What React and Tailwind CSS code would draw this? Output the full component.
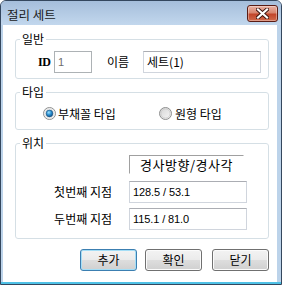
import React from "react";

function CloseX() {
  return (
    <svg width="13" height="11" viewBox="0 0 13 11">
      <path d="M2 1.5 L11 9.5 M11 1.5 L2 9.5" stroke="#3b1510" strokeWidth="4" strokeLinecap="square" />
      <path d="M2 1.5 L11 9.5 M11 1.5 L2 9.5" stroke="#ffffff" strokeWidth="2.2" strokeLinecap="square" />
    </svg>
  );
}

function Radio({ checked }) {
  return (
    <svg width="13" height="13" viewBox="0 0 13 13">
      <defs>
        <linearGradient id={checked ? "rgc" : "rgu"} x1="0" y1="0" x2="1" y2="1">
          <stop offset="0" stopColor={checked ? "#f4f4f4" : "#d4d4d4"} />
          <stop offset="1" stopColor={checked ? "#ffffff" : "#f8f8f8"} />
        </linearGradient>
        <radialGradient id="rdot" cx="0.4" cy="0.35" r="0.7">
          <stop offset="0" stopColor="#9fe2ff" />
          <stop offset="0.5" stopColor="#2a8fd0" />
          <stop offset="1" stopColor="#0d4d86" />
        </radialGradient>
      </defs>
      <circle cx="6.5" cy="6.5" r="6" fill={`url(#${checked ? "rgc" : "rgu"})`} stroke="#8e8f8f" strokeWidth="1" />
      <circle cx="6.5" cy="6.5" r="4.6" fill="none" stroke={checked ? "#d6d6d6" : "#c9c9c9"} strokeWidth="0.8" />
      {checked && <circle cx="6.5" cy="6.5" r="3.4" fill="url(#rdot)" stroke="#1c4f7a" strokeWidth="0.6" />}
    </svg>
  );
}

function Btn({ children, def, className = "" }) {
  return (
    <div
      className={
        "w-[57px] h-[22px] rounded-[3px] border flex items-center justify-center text-[12px] leading-[16px] text-black bg-[linear-gradient(#f3f3f3_0%,#ebebeb_48%,#dddddd_52%,#d0d0d0_100%)] " +
        (def
          ? "border-[#3c7fb1] shadow-[inset_0_0_0_1px_#a5def6] "
          : "border-[#707070] shadow-[inset_0_0_0_1px_#fbfbfb] ") +
        className
      }
    >
      {children}
    </div>
  );
}

export default function App() {
  return (
    <div className="w-[282px] h-[285px] flex flex-col border border-[#34475e] rounded-t-[6px] bg-[#bcd3ea] overflow-hidden font-['Noto_Sans_CJK_KR','Noto_Sans',sans-serif] text-black">
      {/* Title bar */}
      <div className="h-[24px] flex items-start justify-between pl-[6px] pr-[3px] bg-[linear-gradient(#a5bedb,#c2d7ed)]">
        <div className="text-[12.5px] leading-[16px] pt-[6px] text-[#1a1a1a]">절리 세트</div>
        <div className="mt-[4px] w-[31px] h-[17px] rounded-[3px] border border-[#5a1c14] flex items-center justify-center bg-[linear-gradient(#eab1a2_0%,#d88670_45%,#c2452a_55%,#d06a4c_100%)] shadow-[inset_0_0_0_1px_rgba(255,255,255,0.35)]">
          <CloseX />
        </div>
      </div>

      {/* Client */}
      <div className="flex-1 bg-white ml-[2px] mr-[4px] flex flex-col">
        {/* 일반 */}
        <fieldset className="min-w-0 border border-[#d5dfe5] rounded-[3px] ml-[12px] mr-[8px] mt-[6px] p-0 pb-[5px]">
          <legend className="ml-[4px] px-[2px] text-[12px] leading-[16px]">일반</legend>
          <div className="flex items-center h-[22px] mt-[4px] text-[12px] leading-[16px]">
            <span className="ml-[22px] w-[16px] font-['Liberation_Serif',serif] text-[12px] font-bold tracking-[-0.5px]">ID</span>
            <div className="w-[38px] h-[22px] border border-[#adb2b5] flex items-center pl-[3px] text-[#6d6d6d] font-['Liberation_Sans',sans-serif] text-[11px]">
              1
            </div>
            <span className="ml-[15px] w-[36px]">이름</span>
            <div className="w-[118px] h-[22px] border border-[#d0d5dd] border-t-[#abadb3] flex items-center pl-[3px] text-[12px]">
              세트(1)
            </div>
          </div>
        </fieldset>

        {/* 타입 */}
        <fieldset className="min-w-0 border border-[#d5dfe5] rounded-[3px] ml-[12px] mr-[8px] mt-[5px] p-0 pb-[9px]">
          <legend className="ml-[4px] px-[2px] text-[12px] leading-[16px]">타입</legend>
          <div className="flex items-center h-[13px] mt-[7px] text-[12px] leading-[16px]">
            <div className="ml-[27px] w-[116px] flex items-center gap-[2px]">
              <Radio checked />
              <span>부채꼴 타입</span>
            </div>
            <div className="flex items-center gap-[3px]">
              <Radio />
              <span>원형 타입</span>
            </div>
          </div>
        </fieldset>

        {/* 위치 */}
        <fieldset className="min-w-0 border border-[#d5dfe5] rounded-[3px] ml-[12px] mr-[8px] mt-[5px] p-0 pb-[8px]">
          <legend className="ml-[4px] px-[2px] text-[12px] leading-[16px]">위치</legend>
          <div className="ml-[113px] mt-[4px] w-[115px] h-[19px] border border-t-[#a0a0a0] border-l-[#a0a0a0] border-r-white border-b-white flex items-center justify-center text-[13px] leading-[16px] tracking-[0.5px]">
            경사방향/경사각
          </div>
          <div className="flex items-center h-[22px] mt-[7px] text-[12px] leading-[16px]">
            <span className="w-[113px] text-right pr-[17px]">첫번째 지점</span>
            <div className="w-[118px] h-[22px] border border-[#d0d5dd] border-t-[#abadb3] flex items-center pl-[3px] font-['Liberation_Sans',sans-serif] text-[11px] tracking-[-0.1px]">
              128.5 / 53.1
            </div>
          </div>
          <div className="flex items-center h-[22px] mt-[5px] text-[12px] leading-[16px]">
            <span className="w-[113px] text-right pr-[17px]">두번째 지점</span>
            <div className="w-[118px] h-[22px] border border-[#d0d5dd] border-t-[#abadb3] flex items-center pl-[3px] font-['Liberation_Sans',sans-serif] text-[11px] tracking-[-0.1px]">
              115.1 / 81.0
            </div>
          </div>
        </fieldset>

        {/* Buttons */}
        <div className="flex justify-end mr-[8px] mt-[10px]">
          <Btn def>추가</Btn>
          <Btn className="ml-[8px]">확인</Btn>
          <Btn className="ml-[10px]">닫기</Btn>
        </div>
      </div>
      <div className="h-[2px] bg-[#4fc1e6]" />
    </div>
  );
}
